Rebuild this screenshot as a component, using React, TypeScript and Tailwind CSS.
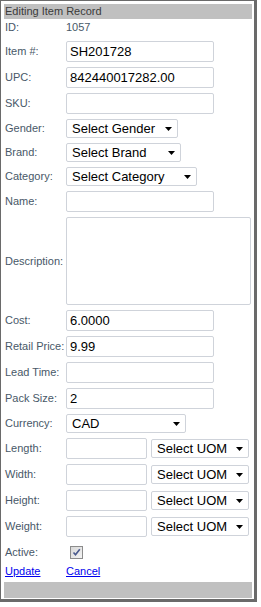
import React from "react";

const LABEL =
  "w-[62px] shrink-0 pl-[1px] text-[11px] leading-[13px] text-[#485868] whitespace-nowrap";

function TextRow({ label, value, w = 148 }: { label: string; value?: string; w?: number }) {
  return (
    <div className="mt-[5px] flex h-[21px] items-center">
      <div className={LABEL}>{label}</div>
      <input
        defaultValue={value ?? ""}
        style={{ width: w }}
        className="h-[21px] rounded-[2px] border border-[#cfd3da] bg-white px-[3px] text-[13px] text-black outline-none font-['Liberation_Sans',Arial,sans-serif]"
      />
    </div>
  );
}

function Caret() {
  return (
    <svg width="7" height="4" viewBox="0 0 7 4" className="shrink-0">
      <path d="M0 0 H7 L3.5 4 Z" fill="#000" />
    </svg>
  );
}

function FakeSelect({ text, w }: { text: string; w: number }) {
  return (
    <div
      style={{ width: w }}
      className="flex h-[19px] items-center justify-between rounded-[2px] border border-[#cfd3da] bg-white pl-[5px] pr-[5px] text-[13px] leading-none text-black"
    >
      <span className="whitespace-nowrap">{text}</span>
      <Caret />
    </div>
  );
}

function SelectRow({ label, text, w }: { label: string; text: string; w: number }) {
  return (
    <div className="mt-[5px] flex h-[19px] items-center">
      <div className={LABEL}>{label}</div>
      <FakeSelect text={text} w={w} />
    </div>
  );
}

function DimRow({ label }: { label: string }) {
  return (
    <div className="mt-[5px] flex h-[21px] items-center">
      <div className={LABEL}>{label}</div>
      <input
        defaultValue=""
        className="h-[21px] w-[81px] rounded-[2px] border border-[#cfd3da] bg-white px-[3px] text-[13px] outline-none"
      />
      <div className="ml-[4px]">
        <FakeSelect text="Select UOM" w={98} />
      </div>
    </div>
  );
}

export default function App() {
  return (
    <div className="font-['Liberation_Sans',Arial,sans-serif]">
      <div className="flex w-[257px] flex-col border-t border-l border-r-[3px] border-b-[3px] border-[#6a6a6a] bg-white pt-[3px] pl-[3px] pr-[1px] pb-[1px]">
        <div className="flex h-[15px] w-[248px] items-center bg-[#c0c0c0] pl-[1px] text-[11px] text-[#3a3a3a]">
          Editing Item Record
        </div>
        <div className="flex h-[17px] items-center">
          <div className={LABEL}>ID:</div>
          <div className="text-[11px] text-[#485868]">1057</div>
        </div>
        <TextRow label="Item #:" value="SH201728" />
        <TextRow label="UPC:" value="842440017282.00" />
        <TextRow label="SKU:" />
        <SelectRow label="Gender:" text="Select Gender" w={112} />
        <SelectRow label="Brand:" text="Select Brand" w={115} />
        <SelectRow label="Category:" text="Select Category" w={131} />
        <TextRow label="Name:" />
        <div className="mt-[5px] flex h-[88px] items-center">
          <div className={LABEL}>Description:</div>
          <textarea className="h-[88px] w-[185px] resize-none rounded-[2px] border border-[#cfd3da] bg-white outline-none" />
        </div>
        <TextRow label="Cost:" value="6.0000" />
        <TextRow label="Retail Price:" value="9.99" />
        <TextRow label="Lead Time:" />
        <TextRow label="Pack Size:" value="2" />
        <SelectRow label="Currency:" text="CAD" w={120} />
        <DimRow label="Length:" />
        <DimRow label="Width:" />
        <DimRow label="Height:" />
        <DimRow label="Weight:" />
        <div className="mt-[5px] flex h-[20px] items-center">
          <div className={LABEL}>Active:</div>
          <div className="ml-[4px] flex h-[13px] w-[13px] items-center justify-center border border-[#8c8c8c] bg-gradient-to-br from-[#d8d8d8] to-[#f4f4f4]">
            <svg width="9" height="9" viewBox="0 0 9 9">
              <path d="M1.5 4.5 L3.5 6.8 L7.8 1.2" fill="none" stroke="#4a5a8e" strokeWidth="1.6" />
            </svg>
          </div>
        </div>
        <div className="flex h-[19px] items-center text-[11px]">
          <a href="#" className="w-[62px] pl-[1px] text-[#0000ee] underline">
            Update
          </a>
          <a href="#" className="text-[#0000ee] underline">
            Cancel
          </a>
        </div>
        <div className="mt-[1px] h-[16px] w-[248px] bg-[#c0c0c0]" />
      </div>
    </div>
  );
}
